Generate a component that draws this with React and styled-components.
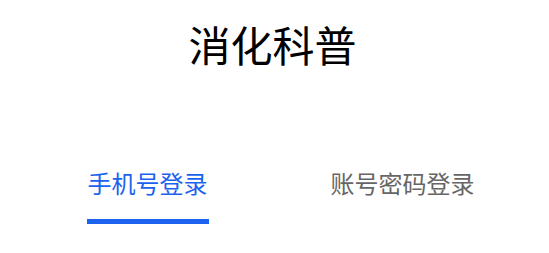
import React, { useState } from 'react';
import styled, { createGlobalStyle } from 'styled-components';

const GlobalStyle = createGlobalStyle`
  html, body {
    margin: 0;
    padding: 0;
    background: #fff;
  }
  body {
    font-family: "Noto Sans CJK SC", "Noto Sans", sans-serif;
  }
`;

const tabs = ['手机号登录', '账号密码登录'];

const App = () => {
  const [active, setActive] = useState(0);
  return (
    <Page>
      <GlobalStyle />
      <Title>消化科普</Title>
      <Tabs>
        {tabs.map((label, i) => (
          <Tab key={label} active={i === active} onClick={() => setActive(i)}>
            <TabLabel active={i === active}>{label}</TabLabel>
          </Tab>
        ))}
      </Tabs>
    </Page>
  );
};

export default App;

const Page = styled.div`
  width: 549px;
  height: 253px;
  display: flex;
  flex-direction: column;
  align-items: stretch;
`;
const Title = styled.h1`
  margin: 14px 0 0;
  padding-right: 4px;
  font-size: 42px;
  font-weight: 400;
  line-height: 60px;
  color: #000;
  text-align: center;
`;
const Tabs = styled.div`
  display: flex;
  padding: 0 19px 0 20px;
  margin-top: 92px;
`;
const Tab = styled.div`
  flex: 1;
  display: flex;
  justify-content: center;
  cursor: pointer;
`;
const TabLabel = styled.span`
  font-size: 24px;
  line-height: 34px;
  color: ${({ active }) => (active ? '#1b62ef' : '#666')};
  padding: 0 1px 19px;
  border-bottom: 5px solid ${({ active }) => (active ? '#1b62ef' : 'transparent')};
`;
